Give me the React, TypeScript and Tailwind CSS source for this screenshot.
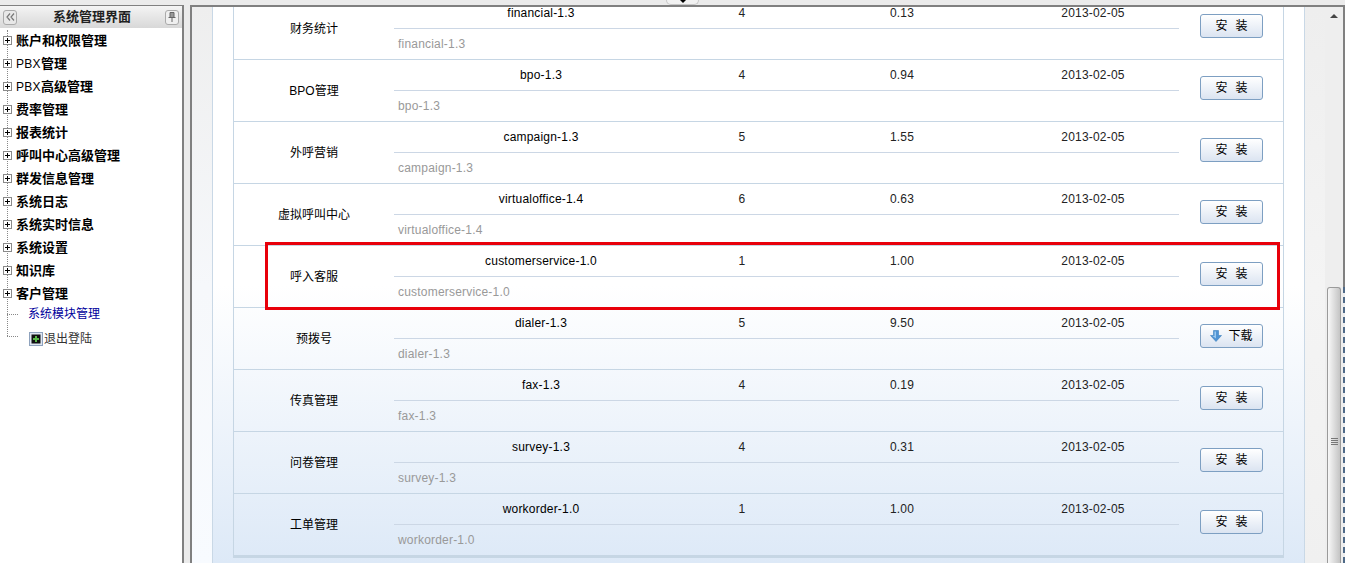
import { ReactNode } from 'react';

const font = '[font-family:"Liberation_Sans","Noto_Sans_CJK_SC",sans-serif]';

const menu: ReactNode[] = [
  '账户和权限管理',
  <><span className="font-normal text-[12px] tracking-[0.3px]">PBX</span>管理</>,
  <><span className="font-normal text-[12px] tracking-[0.3px]">PBX</span>高级管理</>,
  '费率管理',
  '报表统计',
  '呼叫中心高级管理',
  '群发信息管理',
  '系统日志',
  '系统实时信息',
  '系统设置',
  '知识库',
  '客户管理',
];

const modules = [
  { label: '财务统计', name: 'financial-1.3', ver: '4', size: '0.13' },
  { label: 'BPO管理', name: 'bpo-1.3', ver: '4', size: '0.94' },
  { label: '外呼营销', name: 'campaign-1.3', ver: '5', size: '1.55' },
  { label: '虚拟呼叫中心', name: 'virtualoffice-1.4', ver: '6', size: '0.63' },
  { label: '呼入客服', name: 'customerservice-1.0', ver: '1', size: '1.00' },
  { label: '预拨号', name: 'dialer-1.3', ver: '5', size: '9.50', download: true },
  { label: '传真管理', name: 'fax-1.3', ver: '4', size: '0.19' },
  { label: '问卷管理', name: 'survey-1.3', ver: '4', size: '0.31' },
  { label: '工单管理', name: 'workorder-1.0', ver: '1', size: '1.00' },
];

function PlusBox() {
  return (
    <svg width="9" height="9" viewBox="0 0 9 9" className="shrink-0 bg-white">
      <rect x="0.5" y="0.5" width="8" height="8" fill="#fff" stroke="#8a8a8a" />
      <path d="M2 4.5h5M4.5 2v5" stroke="#000" />
    </svg>
  );
}

function ArrowIcon() {
  return (
    <svg width="12" height="12" viewBox="0 0 12 12">
      <path d="M3.5 0.5h5v5h3L6 11.5 0.5 5.5h3z" fill="#4f94d4" stroke="#3b7fbe" strokeWidth="0.6" />
      <path d="M4.5 1.5h1.5v7L2.5 6h2z" fill="#9cc9ef" />
    </svg>
  );
}

function ModuleRow({ m }: { m: (typeof modules)[number] }) {
  return (
    <div className="flex h-[62px] border-b border-[#c6d6e4]">
      <div className="w-[160px] flex items-center justify-center text-[12px] text-black pt-[1px]">{m.label}</div>
      <div className="w-[785px] flex flex-col">
        <div className="h-[31px] flex text-[12px] leading-[14px] pt-[8px] border-b border-[#ccd7e5] text-[#222] tracking-[0.2px]">
          <div className="w-[294px] text-center text-black">{m.name}</div>
          <div className="w-[108px] text-center">{m.ver}</div>
          <div className="w-[212px] text-center">{m.size}</div>
          <div className="w-[170px] text-center">2013-02-05</div>
        </div>
        <div className="pl-[4px] pt-[8px] text-[12px] leading-[14px] text-[#999] tracking-[0.2px]">{m.name}</div>
      </div>
      <div className="pl-[21px] pt-[16px]">
        <button className="w-[63px] h-[24px] flex items-center justify-center gap-[8px] rounded-[3px] border border-[#7d9fc2] bg-gradient-to-b from-white to-[#dbe4f1] text-[12px] text-black">
          {m.download ? (
            <>
              <ArrowIcon />
              <span className="-ml-[2px]">下载</span>
            </>
          ) : (
            <>
              <span>安</span>
              <span>装</span>
            </>
          )}
        </button>
      </div>
    </div>
  );
}

export default function App() {
  return (
    <div className={`relative flex w-[1345px] h-[563px] overflow-hidden bg-[#ebebeb] pt-[5px] ${font}`}>
      {/* Collapse tab */}
      <div className="absolute left-[666px] top-0 w-[33px] h-[5px] rounded-b-[6px] border border-t-0 border-[#c8c8c8] bg-[#f2f2f2] flex justify-center">
        <div className="w-0 h-0 border-x-[3px] border-x-transparent border-t-[3px] border-t-black" />
      </div>

      {/* Sidebar */}
      <div className="w-[184px] shrink-0 border-t border-r-2 border-[#808080] bg-white">
        <div className="h-[22px] flex items-center justify-between px-[3px] bg-gradient-to-b from-[#f4f4f4] to-[#d8d8d8]">
          <div className="w-[14px] h-[15px] rounded-[3px] border border-[#aaa] bg-[#e8e8e8] flex items-center justify-center">
            <svg width="9" height="8" viewBox="0 0 9 8" fill="none" stroke="#777" strokeWidth="1.2">
              <path d="M4 0.5L1 4l3 3.5M8 0.5L5 4l3 3.5" />
            </svg>
          </div>
          <div className="text-[13px] font-bold text-[#222] ml-[2px]">系统管理界面</div>
          <div className="w-[14px] h-[15px] rounded-[3px] border border-[#aaa] bg-[#efefef] flex items-center justify-center">
            <svg width="8" height="10" viewBox="0 0 8 10">
              <path d="M2 0.5h4v5H2zM0.5 5.5h7M4 5.5V10" fill="#999" stroke="#666" />
            </svg>
          </div>
        </div>
        <div className="relative pt-[1px]">
          <div className="absolute left-[7px] top-[2px] h-[306px] border-l border-dotted border-[#888]" />
          {menu.map((item, i) => (
            <div key={i} className="relative h-[23px] flex items-center pl-[3px] gap-[4px] text-[13px] font-bold text-black">
              <PlusBox />
              <span>{item}</span>
            </div>
          ))}
          <div className="relative h-[18px] flex items-center pl-[28px] text-[12px] text-[#00009c]">
            <div className="absolute left-[7px] top-[9px] w-[11px] border-t border-dotted border-[#888]" />
            系统模块管理
          </div>
          <div className="relative h-[32px] flex items-center pl-[29px] text-[12px] text-[#333]">
            <div className="absolute left-[7px] top-[13px] w-[11px] border-t border-dotted border-[#888]" />
            <svg width="14" height="14" viewBox="0 0 14 14" className="mr-[1px]">
              <rect x="0.5" y="0.5" width="13" height="13" fill="#dfe6f2" stroke="#8ea2bd" />
              <rect x="2.5" y="2.5" width="9" height="9" fill="#111" />
              <path d="M7 4v6M4 7h6" stroke="#58b848" strokeWidth="2" />
            </svg>
            退出登陆
          </div>
        </div>
      </div>

      {/* Main pane */}
      <div className="ml-[6px] flex-1 flex border-l-2 border-t-2 border-[#808080] overflow-hidden bg-white">
        <div className="w-[20px] shrink-0 bg-gradient-to-b from-[#eeeeee] via-[#f6f8fb] via-50% to-[#f8fbff]" />
        <div className="w-[1093px] shrink-0 border-x border-[#c9d8e6] px-[20px] bg-gradient-to-b from-white via-white via-50% to-[#dde9f7]">
          <div className="-mt-[9px] border-x border-b-2 border-[#c6d6e4] w-[1051px]">
            {modules.map((m) => (
              <ModuleRow key={m.name} m={m} />
            ))}
          </div>
        </div>
        <div className="w-[20px] shrink-0 bg-gradient-to-b from-[#eeeeee] via-[#f4f4f4] to-[#f0f0f0]" />

        {/* Scrollbar */}
        <div className="w-[20px] shrink-0 flex flex-col bg-[#eeeeee]">
          <div className="h-[280px] border-r-2 border-[#808080]">
            <div className="h-[14px] flex justify-center items-center pt-[3px]">
              <div className="w-0 h-0 border-x-[4px] border-x-transparent border-b-[4px] border-b-[#444]" />
            </div>
          </div>
          <div className="flex-1 flex pl-[2px] border-r-2 border-dashed border-[#4f6a88]">
            <div className="w-[14px] rounded-t-[3px] border border-b-0 border-[#9a9a9a] bg-gradient-to-r from-[#f8f8f8] to-[#c4c4c4] flex flex-col items-center pt-[150px] gap-[1px]">
              <div className="w-[7px] border-t border-[#777]" />
              <div className="w-[7px] border-t border-[#777]" />
              <div className="w-[7px] border-t border-[#777]" />
              <div className="w-[7px] border-t border-[#777]" />
            </div>
          </div>
        </div>
      </div>

      {/* Red annotation box */}
      <div className="absolute left-[265px] top-[242px] w-[1015px] h-[68px] border-[3px] border-[#e8000a]" />
    </div>
  );
}
